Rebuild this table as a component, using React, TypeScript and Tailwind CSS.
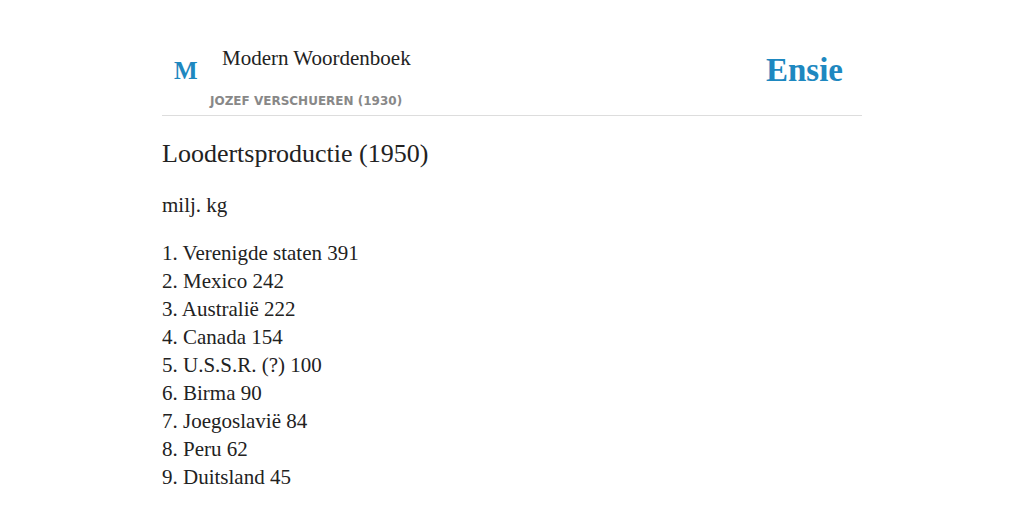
const rows = [
  "1. Verenigde staten 391",
  "2. Mexico 242",
  "3. Australië 222",
  "4. Canada 154",
  "5. U.S.S.R. (?) 100",
  "6. Birma 90",
  "7. Joegoslavië 84",
  "8. Peru 62",
  "9. Duitsland 45",
];

export default function App() {
  return (
    <div className="w-[1024px] h-[512px] bg-white overflow-hidden font-['Liberation_Serif',serif] text-[#222]">
      <div className="w-[700px] mx-auto pt-[44px]">
        {/* Header */}
        <header className="flex items-start justify-between border-b border-[#dddddd] pb-[6px]">
          <div className="flex items-start">
            <div className="w-[48px] pt-[14px] pl-[12px] text-[25px] font-bold leading-none text-[#1e88c0]">M</div>
            <div className="flex flex-col">
              <span className="pl-[12px] text-[21px] leading-[28px]">Modern Woordenboek</span>
              <span className="mt-[21px] font-['DejaVu_Sans',sans-serif] text-[12px] font-bold leading-[16px] text-[#888888]">
                JOZEF VERSCHUEREN (1930)
              </span>
            </div>
          </div>
          <div className="pt-[6px] pr-[19px] text-[33px] font-bold leading-[40px] text-[#1e88c0]">Ensie</div>
        </header>

        <h1 className="mt-[22px] text-[26px] leading-[32px]">Loodertsproductie (1950)</h1>
        <p className="mt-[21px] text-[21px] leading-[28px]">milj. kg</p>
        <ul className="mt-[20px] text-[21px] leading-[28px]">
          {rows.map((r) => (
            <li key={r}>{r}</li>
          ))}
        </ul>
      </div>
    </div>
  );
}
